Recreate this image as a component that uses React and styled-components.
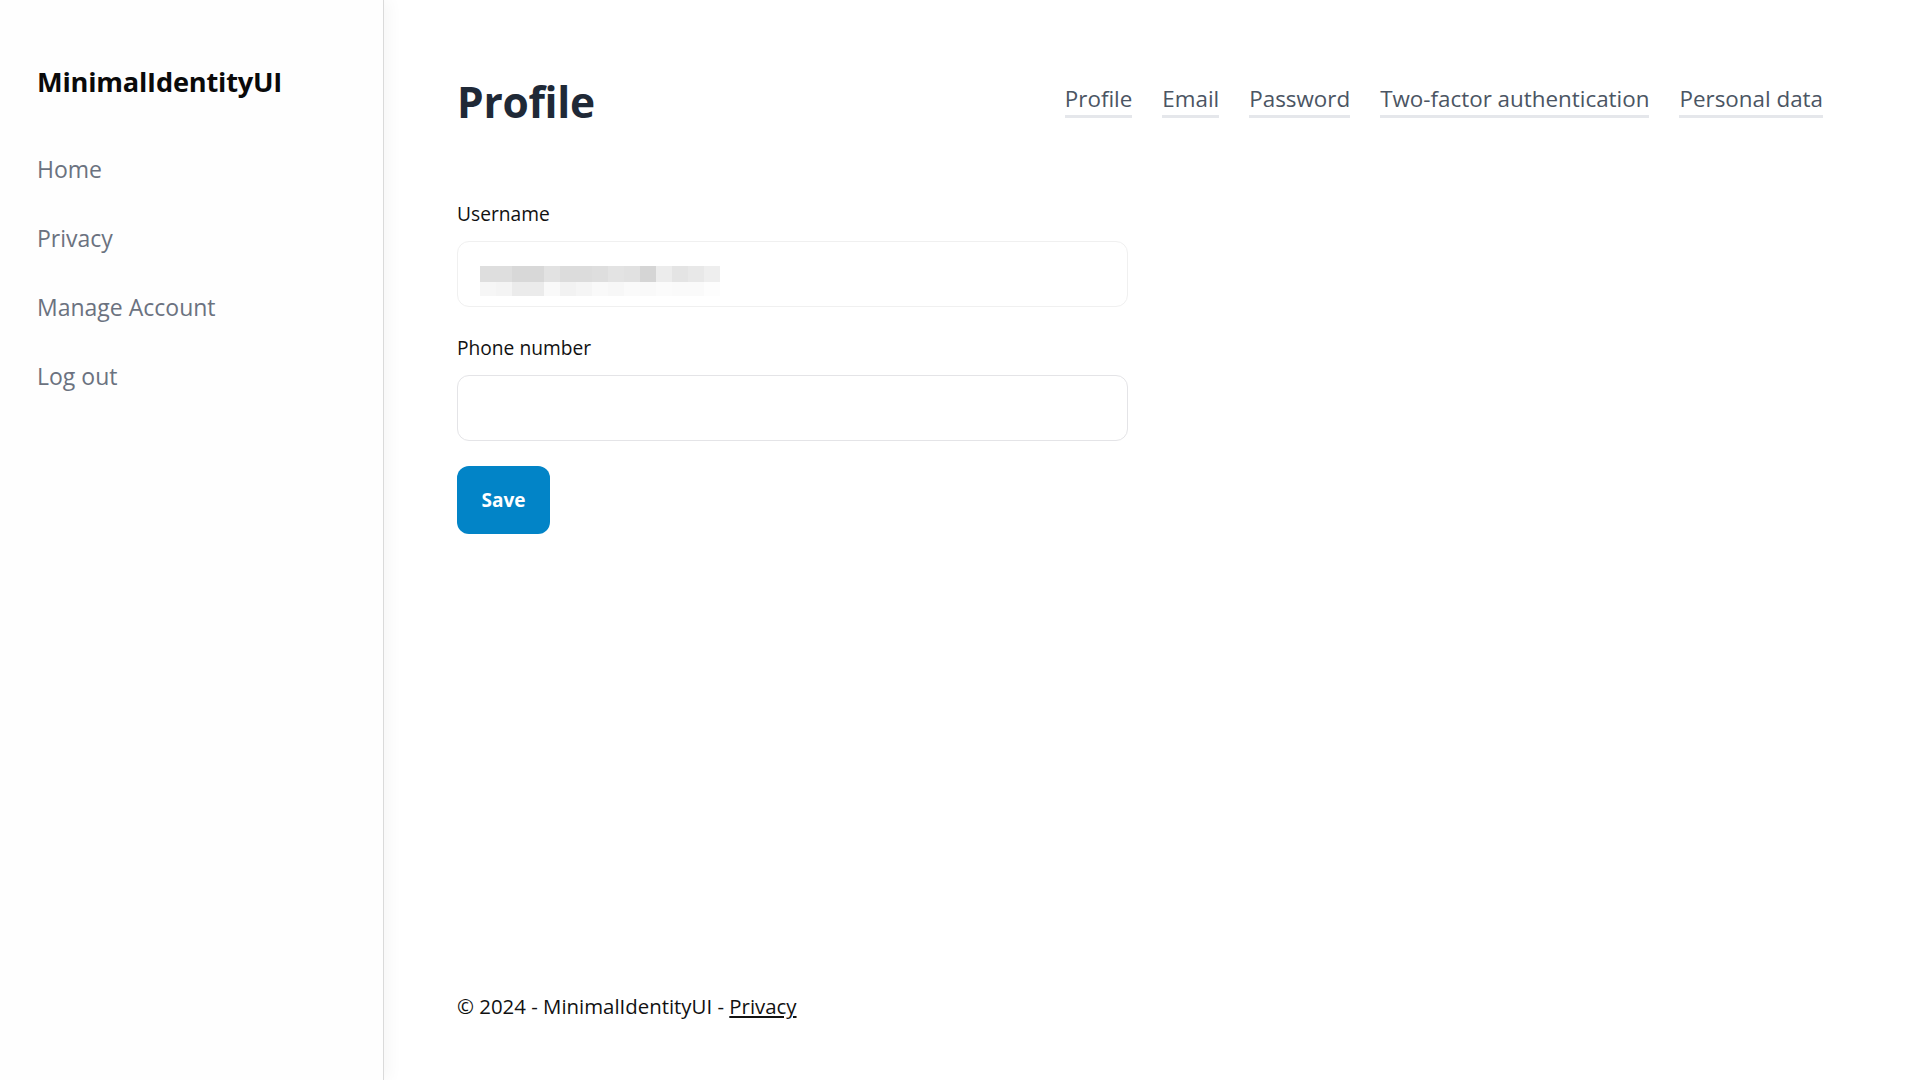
import styled, { createGlobalStyle } from 'styled-components';

const GlobalStyle = createGlobalStyle`
  html, body {
    margin: 0;
    padding: 0;
    background: #ffffff;
    font-family: "Open Sans", "Noto Sans", sans-serif;
  }
  * { box-sizing: border-box; }
`;

// ── Layout ──────────────────────────────────────────
const Shell = styled.div`
  display: flex;
  min-height: 100vh;
`;

const Sidebar = styled.aside`
  position: relative;
  z-index: 1;
  width: 384px;
  flex-shrink: 0;
  padding: 62px 0 0 37px;
  background: #fefefe;
  border-right: 1px solid #dadada;
  box-shadow: 6px 0 14px rgba(0, 0, 0, 0.035);
`;

const Brand = styled.div`
  font-size: 27.2px;
  font-weight: 700;
  line-height: 40px;
  color: #0a0a0a;
  letter-spacing: -0.2px;
`;

const Nav = styled.nav`
  display: flex;
  flex-direction: column;
  gap: 35px;
  margin-top: 50px;
`;

const NavLink = styled.a`
  font-size: 23px;
  line-height: 34px;
  color: #6b7280;
  text-decoration: none;
`;

const Main = styled.main`
  flex: 1;
  display: flex;
  flex-direction: column;
  padding: 77px 97px 60px 73px;
`;

const Content = styled.div`
  flex: 1;
`;

const Header = styled.header`
  display: flex;
  align-items: center;
  justify-content: space-between;
`;

const Title = styled.h1`
  margin: 0;
  font-size: 42.5px;
  font-weight: 700;
  line-height: 49px;
  color: #1f2937;
  letter-spacing: -0.3px;
`;

const Tabs = styled.div`
  display: flex;
  gap: 30px;
  margin-top: -1px;
`;

const Tab = styled.a`
  font-size: 22.4px;
  line-height: 30px;
  color: #4b5563;
  text-decoration: none;
  padding-bottom: 1px;
  border-bottom: 3px solid #e5e7eb;
`;

// ── Form ────────────────────────────────────────────
const Form = styled.form`
  display: flex;
  flex-direction: column;
  align-items: flex-start;
  margin-top: 74px;
  width: 671px;
`;

const Label = styled.label`
  font-size: 19.2px;
  line-height: 28px;
  color: #111111;
  margin: ${(p) => (p.$first ? '0' : '27px')} 0 13px;
`;

const FieldBox = styled.div`
  width: 100%;
  height: 66px;
  border: 1px solid ${(p) => (p.$faint ? '#f0f0f0' : '#e4e4e7')};
  border-radius: 12px;
  background: #ffffff;
  padding: 24px 22px 0;
`;

const TextInput = styled.input`
  width: 100%;
  height: 66px;
  border: 1px solid #e4e4e7;
  border-radius: 12px;
  background: #ffffff;
  padding: 0 22px;
  font: inherit;
  font-size: 19px;
  outline: none;
`;

const SaveButton = styled.button`
  margin-top: 25px;
  width: 93px;
  height: 68px;
  border: none;
  border-radius: 12px;
  background: #0284c7;
  color: #ffffff;
  font: inherit;
  font-size: 19px;
  font-weight: 700;
  cursor: pointer;
`;

// ── Footer ──────────────────────────────────────────
const Footer = styled.footer`
  font-size: 20.4px;
  line-height: 28px;
  color: #111111;
`;

const FooterLink = styled.a`
  color: #111111;
  text-decoration: underline;
`;

// pixelated (redacted) username value
const topRow = ['#dedede', '#dedede', '#d8d8d8', '#d8d8d8', '#e2e2e2', '#dcdcdc', '#dcdcdc', '#dedede', '#e3e3e3', '#e1e1e1', '#d5d5d5', '#ececec', '#e4e4e4', '#e8e8e8', '#eeeeee'];
const bottomRow = ['#f6f6f6', '#f4f4f4', '#ebebeb', '#ebebeb', '#f9f9f9', '#f2f2f2', '#f5f5f5', '#f9f9f9', '#f7f7f7', '#fafafa', '#f9f9f9', '#fbfbfb', '#fafafa', '#fafafa', '#fdfdfd'];

const Redacted = () => (
  <svg width="240" height="30" viewBox="0 0 240 30">
    {topRow.map((c, i) => (
      <rect key={`t${i}`} x={i * 16} y="0" width="16" height="16" fill={c} />
    ))}
    {bottomRow.map((c, i) => (
      <rect key={`b${i}`} x={i * 16} y="16" width="16" height="14" fill={c} />
    ))}
  </svg>
);

const tabs = ['Profile', 'Email', 'Password', 'Two-factor authentication', 'Personal data'];
const links = ['Home', 'Privacy', 'Manage Account', 'Log out'];

const App = () => (
  <>
    <GlobalStyle />
    <Shell>
      <Sidebar>
        <Brand>MinimalIdentityUI</Brand>
        <Nav>
          {links.map((l) => (
            <NavLink key={l} href="#">{l}</NavLink>
          ))}
        </Nav>
      </Sidebar>

      <Main>
        <Content>
          <Header>
            <Title>Profile</Title>
            <Tabs>
              {tabs.map((t) => (
                <Tab key={t} href="#">{t}</Tab>
              ))}
            </Tabs>
          </Header>

          <Form onSubmit={(e) => e.preventDefault()}>
            <Label $first>Username</Label>
            <FieldBox $faint>
              <Redacted />
            </FieldBox>
            <Label>Phone number</Label>
            <TextInput type="tel" />
            <SaveButton type="submit">Save</SaveButton>
          </Form>
        </Content>

        <Footer>
          © 2024 - MinimalIdentityUI - <FooterLink href="#">Privacy</FooterLink>
        </Footer>
      </Main>
    </Shell>
  </>
);

export default App;
